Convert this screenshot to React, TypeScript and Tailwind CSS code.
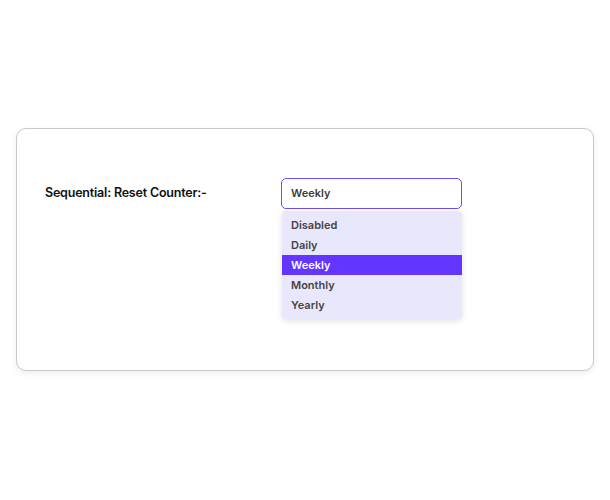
import { useState } from 'react'

const OPTIONS = ['Disabled', 'Daily', 'Weekly', 'Monthly', 'Yearly']

export default function App() {
  const [value, setValue] = useState('Weekly')

  return (
    <div className="w-[610px] h-[500px] bg-white pt-[128px] px-4" style={{ fontFamily: 'Inter, "DejaVu Sans", sans-serif' }}>
      <div className="h-[243px] rounded-[10px] border border-[#c9c9c9] bg-white shadow-[0_2px_6px_rgba(0,0,0,0.08)] pt-[49px] pl-[28px]">
        <div className="flex items-start">
          <div className="w-[236px] h-[31px] flex items-center text-[12.5px] font-semibold text-[#111] tracking-[-0.2px]">
            Sequential: Reset Counter:-
          </div>
          <div className="relative w-[181px]">
            <div className="h-[31px] rounded-[5px] border border-[#6e4cff] bg-white flex items-center px-[9px] text-[11px] font-semibold text-[#3a3a3a]">
              {value}
            </div>
            <div className="absolute left-[1px] right-0 top-[33px] rounded-[4px] bg-[#e8e7fb] py-[4px] shadow-[0_2px_6px_rgba(0,0,0,0.12)]">
              {OPTIONS.map((o) => (
                <div
                  key={o}
                  onClick={() => setValue(o)}
                  className={`h-[20px] flex items-center px-[9px] text-[11px] font-semibold ${
                    o === value ? 'bg-[#6236ff] text-white' : 'text-[#444]'
                  }`}
                >
                  {o}
                </div>
              ))}
            </div>
          </div>
        </div>
      </div>
    </div>
  )
}
